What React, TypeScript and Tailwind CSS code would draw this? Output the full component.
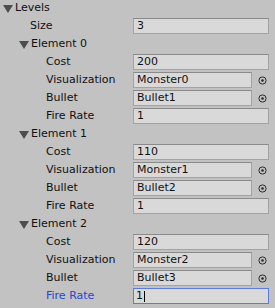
import React from 'react'

const font = { fontFamily: '"DejaVu Sans", "Liberation Sans", sans-serif' }

function Arrow() {
  return (
    <svg width="10" height="9" viewBox="0 0 10 9" className="shrink-0">
      <polygon points="0,1 10,1 5,9" fill="#4d4d4d" />
    </svg>
  )
}

function Picker() {
  return (
    <div className="flex w-[17px] shrink-0 items-center pl-[6px]">
      <svg width="9" height="9" viewBox="0 0 9 9">
        <circle cx="4.5" cy="4.5" r="3.6" fill="none" stroke="#2b2b2b" strokeWidth="1" />
        <circle cx="4.5" cy="4.5" r="1.3" fill="#2b2b2b" />
      </svg>
    </div>
  )
}

function Foldout({ label, indent }: { label: string; indent: string }) {
  return (
    <div className={`flex h-[16px] mb-[2px] items-center gap-[2px] ${indent}`}>
      <Arrow />
      <span className="text-[11px] text-[#111]">{label}</span>
    </div>
  )
}

function Field({
  label,
  value,
  indent,
  picker,
  focused,
}: {
  label: string
  value: string
  indent: string
  picker?: boolean
  focused?: boolean
}) {
  return (
    <div className="flex h-[16px] mb-[2px] items-center pr-[6px]">
      <div className={`w-[133px] shrink-0 text-[11px] ${indent} ${focused ? 'text-[#1f47d8]' : 'text-[#111]'}`}>
        {label}
      </div>
      <div
        className={
          focused
            ? 'flex h-[16px] flex-1 items-center border-[1.5px] border-[#5b79e0] bg-[#d9d9d9] px-[2px] text-[11px] text-[#111]'
            : 'flex h-[16px] flex-1 items-center border border-[#a3a3a3] border-t-[#8a8a8a] bg-[#d9d9d9] px-[3px] text-[11px] text-[#111]'
        }
      >
        {value}
        {focused && <span className="ml-[1px] h-[11px] w-[1px] bg-black" />}
      </div>
      {picker && <Picker />}
    </div>
  )
}

function Element({ n, cost, last }: { n: number; cost: string; last?: boolean }) {
  return (
    <>
      <Foldout label={`Element ${n}`} indent="pl-[19px]" />
      <Field label="Cost" value={cost} indent="pl-[46px]" />
      <Field label="Visualization" value={`Monster${n}`} indent="pl-[46px]" picker />
      <Field label="Bullet" value={`Bullet${n + 1}`} indent="pl-[46px]" picker />
      <Field label="Fire Rate" value="1" indent="pl-[46px]" focused={last} />
    </>
  )
}

export default function App() {
  return (
    <div className="h-[308px] w-[275px] overflow-hidden bg-[#c2c2c2]" style={font}>
      <Foldout label="Levels" indent="pl-[3px]" />
      <Field label="Size" value="3" indent="pl-[30px]" />
      <Element n={0} cost="200" />
      <Element n={1} cost="110" />
      <Element n={2} cost="120" last />
    </div>
  )
}
